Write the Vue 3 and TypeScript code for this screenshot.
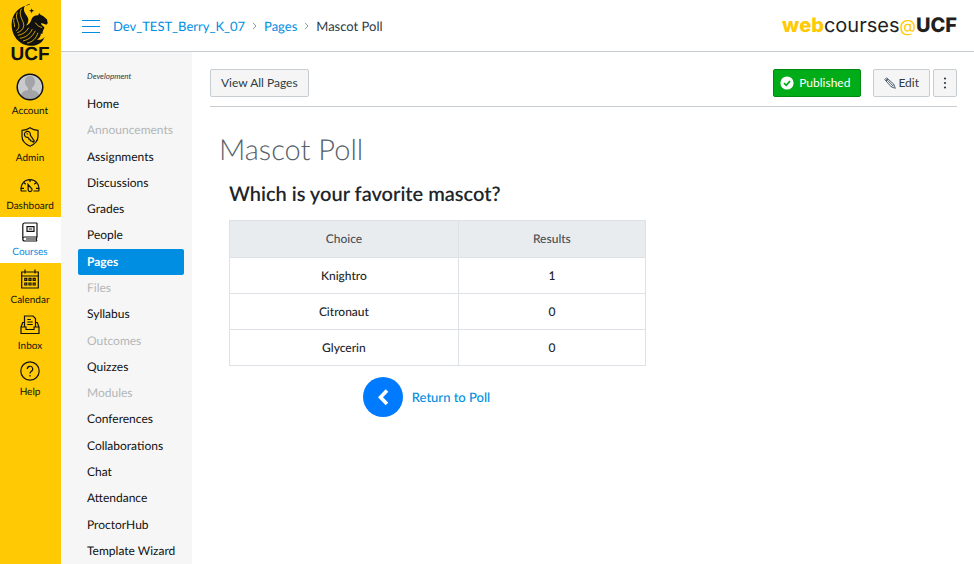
<script setup lang="ts">
interface GlobalItem {
  label: string
  icon: string
  roomy?: boolean
  active?: boolean
}

interface CourseItem {
  label: string
  state?: 'muted' | 'active'
}

interface PollRow {
  choice: string
  votes: number
}

const globalItems: GlobalItem[] = [
  { label: 'Account', icon: 'account', roomy: true },
  { label: 'Admin', icon: 'admin', roomy: true },
  { label: 'Dashboard', icon: 'dashboard', roomy: true },
  { label: 'Courses', icon: 'courses', active: true },
  { label: 'Calendar', icon: 'calendar' },
  { label: 'Inbox', icon: 'inbox' },
  { label: 'Help', icon: 'help' },
]

const courseItems: CourseItem[] = [
  { label: 'Home' },
  { label: 'Announcements', state: 'muted' },
  { label: 'Assignments' },
  { label: 'Discussions' },
  { label: 'Grades' },
  { label: 'People' },
  { label: 'Pages', state: 'active' },
  { label: 'Files', state: 'muted' },
  { label: 'Syllabus' },
  { label: 'Outcomes', state: 'muted' },
  { label: 'Quizzes' },
  { label: 'Modules', state: 'muted' },
  { label: 'Conferences' },
  { label: 'Collaborations' },
  { label: 'Chat' },
  { label: 'Attendance' },
  { label: 'ProctorHub' },
  { label: 'Template Wizard' },
]

const results: PollRow[] = [
  { choice: 'Knightro', votes: 1 },
  { choice: 'Citronaut', votes: 0 },
  { choice: 'Glycerin', votes: 0 },
]
</script>

<template>
  <div class="app">
    <nav class="global-nav" aria-label="Global">
      <a class="brand" href="#">
        <svg class="pegasus" viewBox="34 10 116 130" aria-hidden="true">
          <path d="M92 12C60 15 37 38 36 70c-1 36 22 65 56 67 24 1 40-12 45-28-6 8-14 11-24 9 8-4 12-11 12-18l5 0c0-10 5-14 6-20l-9-7-1-6 8 3 8 3 4-5-2-11-12-11-7-3-5-6-3 7c-12 0-19 5-21 14-3 9-8 14-16 17 8-9 9-19 4-27-6-9-13-18-10-28 2-6 8-10 18-10z" />
          <path d="M97 22l2 6 6 2-6 2-2 6-2-6-6-2 6-2z" />
          <g class="feathers">
            <path d="M66 24c-12 20 8 36 7 52-1 10-10 18-20 21" />
            <path d="M53 35c-8 18 7 31 5 44-1 6-5 10-9 12" />
            <path d="M43 52c-3 12 3 18 2 28" />
            <path d="M88 82c-7 13-19 21-33 23" />
            <path d="M99 86c-7 16-21 26-38 28" />
            <path d="M108 91c-7 16-19 27-37 31" />
            <path d="M116 97c-4 16-15 28-33 32" />
            <path d="M108 66c6 10 13 13 21 15M140 84c-5 7-5 12-3 16" />
          </g>
        </svg>
        <span class="brand-name">UCF</span>
      </a>
      <a
        v-for="item in globalItems"
        :key="item.label"
        href="#"
        class="global-item"
        :class="[item.icon, { roomy: item.roomy, active: item.active }]"
      >
        <svg v-if="item.icon === 'account'" class="avatar" viewBox="0 0 28 28" aria-hidden="true">
          <circle cx="14" cy="14" r="12.5" fill="#c9cacc" />
          <path d="M5 23c0-4 3-5 7-6v-2c-2-2-3-4-3-6 0-4 2-6 5-6s5 2 5 6c0 2-1 4-3 6v2c4 1 7 2 7 6-5 5-13 5-18 0z" fill="#a3a4a7" />
          <circle cx="14" cy="14" r="12.8" fill="none" stroke="#111" stroke-width="1.5" />
        </svg>
        <svg v-else class="glyph" viewBox="0 0 20 20" aria-hidden="true">
          <g v-if="item.icon === 'admin'">
            <path d="M10 .8c2.500 1.800 5 2.500 8 2.500v6.200c0 4.500-3.500 7.700-8 9.700-4.500-2-8-5.200-8-9.700V3.300c3 0 5.500-.7 8-2.500z" />
            <path d="M10.300 8.200a3 3 0 1 0-2.600 2.200l1.200 1 .2 1.100 1.200.2.300 1.200 1.200.1 1.500 1.200 1-1.300zM6.800 6.500l1 .9" />
          </g>
          <g v-else-if="item.icon === 'dashboard'">
            <path d="M6.500 16H1.300A9 9 0 1 1 18.700 16h-5.200M10 4.500v2.500M4 7.700l1.700 1.500M16 7.700l-1.700 1.500M1.500 13.300H4M16 13.300h2.500" />
            <path d="M8 9.500l3.200 3.600a1.900 1.900 0 1 1-3 1.600z" />
          </g>
          <g v-else-if="item.icon === 'courses'">
            <path d="M17 1H4.500A2 2 0 0 0 2.800 3v14c0 1.300.8 2 2 2H17M17 1v14H4.800a2 2 0 0 0-2 2M17 15c-1 1.300-1 2.700 0 4M6 17h10M7 4.700h7v4.600H7zM8.800 7h3.400" />
          </g>
          <g v-else-if="item.icon === 'calendar'">
            <path d="M1.700 3h16.600v16H1.700zM1.700 7h16.600M5 .5v4M15 .5v4" />
            <path d="M4.800 9.300h2v2h-2zM9 9.300h2v2H9zM13.200 9.300h2v2h-2zM4.800 14h2v2h-2zM9 14h2v2H9zM13.200 14h2v2h-2z" />
          </g>
          <g v-else-if="item.icon === 'inbox'">
            <path d="M4.500 12V1h8.500l2.500 2.500V12M4.500 7.500H2.700L1 12v6.500h18V12l-1.700-4.500h-1.800M1 12h5v2.500h8V12h5M7.300 4.500h3.500M7.300 7h5.400M7.300 9.500h5.400" />
          </g>
          <g v-else>
            <circle cx="10" cy="10" r="9.200" />
            <path d="M7.300 8a2.700 2.700 0 1 1 3.900 2.400c-.9.500-1.200 1-1.200 2.100M10 14v1.500" />
          </g>
        </svg>
        <span>{{ item.label }}</span>
      </a>
    </nav>

    <div class="main">
      <header class="topbar">
        <button class="menu-toggle" type="button" aria-label="Toggle course navigation">
          <i></i><i></i><i></i>
        </button>
        <nav class="crumbs" aria-label="Breadcrumb">
          <a href="#">Dev_TEST_Berry_K_07</a>
          <svg viewBox="0 0 5 8" aria-hidden="true"><path d="M1 .8L4 4 1 7.200" /></svg>
          <a href="#">Pages</a>
          <svg viewBox="0 0 5 8" aria-hidden="true"><path d="M1 .8L4 4 1 7.200" /></svg>
          <span>Mascot Poll</span>
        </nav>
        <div class="wordmark">
          <b class="gold">web</b><span>courses</span><span class="gold at">@</span><b>UCF</b>
        </div>
      </header>

      <div class="body">
        <nav class="course-nav" aria-label="Course">
          <p class="term">Development</p>
          <ul>
            <li v-for="item in courseItems" :key="item.label">
              <a href="#" :class="item.state">{{ item.label }}</a>
            </li>
          </ul>
        </nav>

        <main class="content">
          <div class="toolbar">
            <button class="btn" type="button">View All Pages</button>
            <div class="actions">
              <button class="btn published" type="button">
                <svg viewBox="0 0 14 14" aria-hidden="true">
                  <circle cx="7" cy="7" r="6.600" fill="#fff" />
                  <path d="M4 7.200l2.200 2.100L10 5.200" fill="none" stroke="#00ac18" stroke-width="1.800" />
                </svg>
                Published
              </button>
              <button class="btn edit" type="button">
                <svg viewBox="0 0 12 12" aria-hidden="true">
                  <path d="M.8 2.600L2.600.8l7.200 6.400 1.500 4.100-4.100-1.500zM2 4l2-2M2 1.800l7.300 7.400M7.200 9.800l2.600-2.600" fill="none" stroke="#556572" stroke-width="1" />
                </svg>
                Edit
              </button>
              <button class="btn more" type="button" aria-label="More options">
                <svg viewBox="0 0 4 12" aria-hidden="true">
                  <circle cx="2" cy="1.500" r="1.100" /><circle cx="2" cy="6" r="1.100" /><circle cx="2" cy="10.500" r="1.100" />
                </svg>
              </button>
            </div>
          </div>

          <h1>Mascot Poll</h1>
          <section class="poll">
            <h2>Which is your favorite mascot?</h2>
            <table>
              <thead>
                <tr><th scope="col">Choice</th><th scope="col">Results</th></tr>
              </thead>
              <tbody>
                <tr v-for="row in results" :key="row.choice">
                  <td>{{ row.choice }}</td>
                  <td>{{ row.votes }}</td>
                </tr>
              </tbody>
            </table>
            <a class="return" href="#">
              <svg viewBox="0 0 40 40" aria-hidden="true">
                <circle cx="20" cy="20" r="20" fill="#007bff" />
                <path d="M24 13.500L17.500 20.300 24 27" fill="none" stroke="#fff" stroke-width="3.600" />
              </svg>
              <span>Return to Poll</span>
            </a>
          </section>
        </main>
      </div>
    </div>
  </div>
</template>

<style>
body {
  margin: 0;
  background: #fff;
}
</style>

<style scoped>
* {
  box-sizing: border-box;
}

.app {
  display: flex;
  min-height: 100vh;
  font-family: Lato, "Liberation Sans", sans-serif;
  font-size: 12px;
  color: #2d3b45;
  text-rendering: geometricPrecision;
}

a {
  color: #008ee2;
  text-decoration: none;
}

.global-nav {
  flex: none;
  width: 61px;
  padding-right: 1px;
  background: #ffc904;
}

.brand {
  display: flex;
  flex-direction: column;
  align-items: center;
  height: 72px;
  padding-top: 4px;
  color: #111;
}

.pegasus {
  width: 38px;
  height: 43px;
  fill: #111;
}

.feathers {
  fill: none;
  stroke: #ffc904;
  stroke-width: 2.4;
}

.brand-name {
  font: bold 19px/16px "Liberation Sans", sans-serif;
}

.global-item {
  display: flex;
  flex-direction: column;
  align-items: center;
  gap: 4px;
  height: 46px;
  margin-right: -1px;
  padding: 6px 1px 0 0;
  font-size: 10px;
  line-height: 14px;
  color: #111;
}

.roomy {
  height: 48px;
}

.account {
  gap: 3px;
  height: 49px;
  padding-top: 1px;
}

.active.global-item {
  gap: 3px;
  padding-top: 5px;
  background: #fff;
  color: #008ee2;
}

.avatar {
  width: 28px;
  height: 28px;
}

.glyph {
  width: 20px;
  height: 20px;
  fill: none;
  stroke: #111;
  stroke-width: 1.2;
}

.main {
  display: flex;
  flex: 1;
  flex-direction: column;
  min-width: 0;
}

.topbar {
  display: flex;
  align-items: center;
  height: 52px;
  padding: 0 17px 0 21px;
  border-bottom: 1px solid #c7cdd1;
}

.menu-toggle {
  display: flex;
  flex-direction: column;
  gap: 5px;
  width: 18px;
  margin-right: 13px;
  padding: 1px 0 0;
  border: 0;
  background: none;
}

.menu-toggle i {
  height: 1px;
  background: #008ee2;
}

.crumbs {
  display: flex;
  align-items: center;
  gap: 7px;
  font-size: 13px;
  line-height: 18px;
}

.crumbs svg {
  width: 5px;
  height: 8px;
  fill: none;
  stroke: #8b969e;
}

.wordmark {
  margin-left: auto;
  font: 20px/24px Inter, sans-serif;
  color: #231f20;
}

.wordmark b {
  font-weight: 800;
}

.wordmark .gold {
  color: #ffc904;
}

.wordmark .at {
  font-size: 17px;
}

.body {
  display: flex;
  flex: 1;
}

.course-nav {
  display: flex;
  flex: none;
  flex-direction: column;
  width: 131px;
  padding: 17px 8px 0 17px;
  background: #f6f6f6;
}

.term {
  margin: 0 0 8px 9px;
  font-size: 8px;
  font-style: italic;
  line-height: 14px;
}

.course-nav ul {
  display: flex;
  flex: 1;
  flex-direction: column;
  justify-content: space-between;
  margin: 0;
  padding: 0;
  list-style: none;
}

.course-nav a {
  display: block;
  padding-left: 9px;
  border-radius: 2px;
  font-size: 12px;
  line-height: 26px;
  color: #111;
}

.course-nav .muted {
  color: #b3b6b8;
}

.course-nav .active {
  background: #008ee2;
  font-weight: 700;
  color: #fff;
}

.content {
  flex: 1;
  min-width: 0;
  padding: 17px 17px 24px 18px;
}

.toolbar {
  display: flex;
  justify-content: space-between;
  padding-bottom: 9px;
  border-bottom: 1px solid #c7cdd1;
}

.actions {
  display: flex;
  gap: 3px;
}

.btn {
  display: flex;
  align-items: center;
  height: 28px;
  padding: 0 10px;
  border: 1px solid #c7cdd1;
  border-radius: 2px;
  background: #f5f5f5;
  font: 12px/16px Lato, "Liberation Sans", sans-serif;
  color: #2d3b45;
}

.published {
  gap: 5px;
  margin-right: 9px;
  padding: 0 10px 0 6px;
  border-color: #008a12;
  background: #00ac18;
  color: #fff;
}

.published svg {
  width: 14px;
  height: 14px;
}

.edit {
  gap: 2px;
}

.edit svg {
  width: 12px;
  height: 12px;
}

.more {
  padding: 0 9px;
}

.more svg {
  width: 4px;
  height: 12px;
  fill: #2d3b45;
}

h1 {
  margin: 24px 0 0 9px;
  font-size: 29px;
  font-weight: 300;
  line-height: 38px;
  color: #56616a;
}

.poll {
  max-width: 436px;
  padding: 12px 0 0 19px;
}

h2 {
  margin: 0 0 13px;
  font-size: 20px;
  font-weight: 600;
  line-height: 26px;
  color: #212529;
}

table {
  width: 100%;
  border-collapse: collapse;
  table-layout: fixed;
  text-align: center;
}

th,
td {
  height: 36px;
  padding: 0;
  border: 1px solid #dee2e6;
  font-size: 12px;
  font-weight: 500;
  line-height: 18px;
  color: #212529;
}

th:first-child {
  width: 55%;
}

th {
  height: 37px;
  background: #e9ecef;
  color: #495057;
}

.return {
  display: flex;
  align-items: center;
  justify-content: center;
  gap: 9px;
  margin-top: 11px;
  padding-right: 22px;
  font-size: 13px;
  font-weight: 500;
}

.return svg {
  width: 40px;
  height: 40px;
}
</style>
